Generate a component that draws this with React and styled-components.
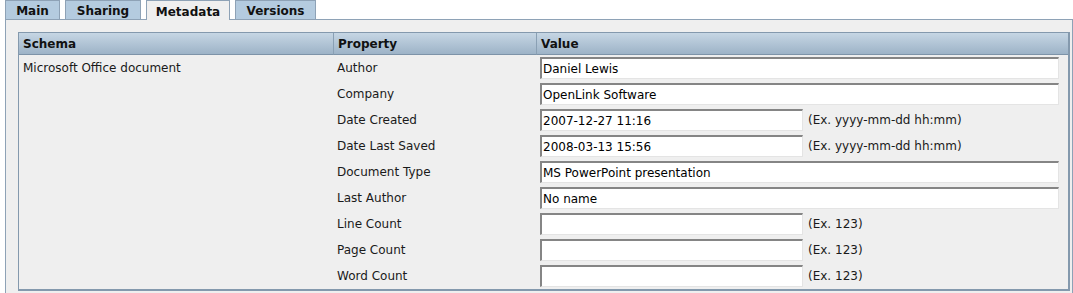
import React from "react";
import styled, { createGlobalStyle } from "styled-components";

const Global = createGlobalStyle`
  html, body { margin: 0; padding: 0; background: #ffffff; }
  body { font-family: "DejaVu Sans", Verdana, sans-serif; font-size: 12px; color: #1a1a1a; }
  * { box-sizing: border-box; }
`;

const Page = styled.div`
  width: 1073px;
  height: 293px;
  overflow: hidden;
`;

const TabBar = styled.div`
  display: flex;
  gap: 5px;
  padding-left: 5px;
  height: 19px;
  align-items: flex-start;
`;

const Tab = styled.div`
  width: ${(p) => p.$w}px;
  height: ${(p) => (p.$active ? "20px" : "19px")};
  padding-top: 2px;
  display: flex;
  align-items: center;
  justify-content: center;
  font-weight: bold;
  font-size: 12px;
  color: #111;
  background: ${(p) => (p.$active ? "#efefef" : "#b4cbdf")};
  border: 1px solid #8ea2b6;
  border-bottom: none;
  position: relative;
  z-index: 1;
`;

const Panel = styled.div`
  background: #efefef;
  border-top: 1px solid #8ea2b6;
  border-left: 1px solid #8ea2b6;
  border-right: 1px solid #8ea2b6;
  margin-left: 5px;
  padding: 12px 2px 4px 12px;
  height: 274px;
`;

const Table = styled.div`
  display: grid;
  grid-template-columns: 314px 203px 1fr;
  border-top: 1px solid #8499ad;
  border-left: 1px solid #8499ad;
  border-right: 2px solid #8499ad;
  border-bottom: 2px solid #8499ad;
`;

const HeadCell = styled.div`
  height: 22px;
  display: flex;
  align-items: center;
  padding-left: 4px;
  font-weight: bold;
  font-size: 12px;
  color: #111;
  background: linear-gradient(#c6d6e4, #9db3c7);
  border-bottom: 1px solid #7d93a8;
  border-left: ${(p) => (p.$first ? "none" : "1px solid #8aa0b4")};
`;

const Cell = styled.div`
  height: 26px;
  display: flex;
  align-items: center;
  padding-left: 4px;
  font-size: 12px;
  color: #1a1a1a;
  gap: 5px;
`;

const Input = styled.input`
  height: 22px;
  width: ${(p) => (p.$short ? "263px" : "519px")};
  border-top: 2px solid #858585;
  border-left: 2px solid #858585;
  border-right: 1px solid #e4e4e4;
  border-bottom: 1px solid #e4e4e4;
  background: #ffffff;
  padding: 0 1px;
  font-family: "DejaVu Sans", Verdana, sans-serif;
  font-size: 12px;
  color: #000;
  outline: none;
`;

const Hint = styled.span`
  font-size: 12px;
  color: #1a1a1a;
`;

const tabs = [
  ["Main", 55, false],
  ["Sharing", 76, false],
  ["Metadata", 84, true],
  ["Versions", 81, false],
];

const rows = [
  ["Author", "Daniel Lewis", false, ""],
  ["Company", "OpenLink Software", false, ""],
  ["Date Created", "2007-12-27 11:16", true, "(Ex. yyyy-mm-dd hh:mm)"],
  ["Date Last Saved", "2008-03-13 15:56", true, "(Ex. yyyy-mm-dd hh:mm)"],
  ["Document Type", "MS PowerPoint presentation", false, ""],
  ["Last Author", "No name", false, ""],
  ["Line Count", "", true, "(Ex. 123)"],
  ["Page Count", "", true, "(Ex. 123)"],
  ["Word Count", "", true, "(Ex. 123)"],
];

export default function App() {
  return (
    <Page>
      <Global />
      <TabBar>
        {tabs.map(([name, w, active]) => (
          <Tab key={name} $w={w} $active={active}>
            {name}
          </Tab>
        ))}
      </TabBar>
      <Panel>
        <Table>
          <HeadCell $first>Schema</HeadCell>
          <HeadCell>Property</HeadCell>
          <HeadCell>Value</HeadCell>
          {rows.map(([label, value, short, hint], i) => (
            <React.Fragment key={label}>
              <Cell>{i === 0 ? "Microsoft Office document" : ""}</Cell>
              <Cell>{label}</Cell>
              <Cell>
                <Input $short={short} defaultValue={value} readOnly />
                {hint && <Hint>{hint}</Hint>}
              </Cell>
            </React.Fragment>
          ))}
        </Table>
      </Panel>
    </Page>
  );
}
